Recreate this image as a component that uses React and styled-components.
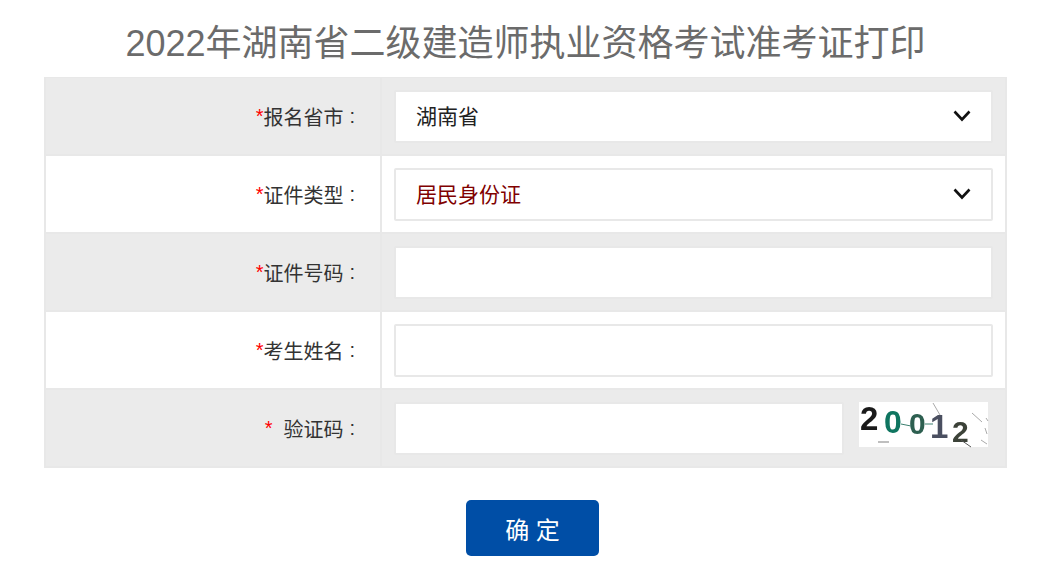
import styled, { createGlobalStyle } from 'styled-components';

const Global = createGlobalStyle`
  html, body {
    margin: 0;
    padding: 0;
    background: #fff;
    font-family: "Liberation Sans", "Noto Sans CJK SC", sans-serif;
  }
`;

const Page = styled.div`
  width: 963px;
  margin-left: 44px;
`;

const Titulo = styled.h1`
  margin: 0;
  height: 77px;
  padding-top: 21px;
  box-sizing: border-box;
  font-size: 36px;
  line-height: 46px;
  font-weight: normal;
  color: #6b6b6b;
  text-align: center;
  white-space: nowrap;
`;

const Tabla = styled.div`
  border: 1px solid #e8e8e8;
  border-bottom-width: 2px;
  border-left-width: 2px;
  border-right-width: 2px;
`;

const Fila = styled.div`
  display: grid;
  grid-template-columns: 336px 1fr;
  height: 76px;
  background: ${props => (props.$gris ? '#ebebeb' : '#fff')};
  border-bottom: 2px solid #e8e8e8;
  &:last-child {
    border-bottom: none;
  }
`;

const Etiqueta = styled.div`
  display: flex;
  align-items: center;
  justify-content: flex-end;
  padding-right: 25px;
  border-right: 2px solid #e8e8e8;
  font-size: 20px;
  color: #333;
  white-space: nowrap;
`;

const Asterisco = styled.span`
  color: #f00;
  margin-right: ${props => (props.$separado ? '11px' : '0')};
`;

const DosPuntos = styled.span`
  margin-left: 6px;
`;

const Campo = styled.div`
  display: flex;
  align-items: center;
  padding-left: 12px;
  gap: 15px;
`;

const SelectCaja = styled.div`
  position: relative;
  width: 599px;
  height: 53px;
`;

const Select = styled.select`
  width: 100%;
  height: 100%;
  box-sizing: border-box;
  appearance: none;
  background: #fff;
  border: 2px solid #e8e8e8;
  border-radius: 2px;
  padding: 0 0 0 20px;
  outline: none;
  font-family: inherit;
  font-size: 21px;
  color: ${props => props.$color};
`;

const Flecha = styled.svg`
  position: absolute;
  right: 22px;
  top: 19px;
  width: 18px;
  height: 14px;
  pointer-events: none;
`;

const Entrada = styled.input`
  width: ${props => props.$ancho};
  height: 53px;
  box-sizing: border-box;
  background: #fff;
  border: 2px solid #e8e8e8;
  border-radius: 2px;
  padding: 0 20px;
  outline: none;
  font-family: inherit;
  font-size: 21px;
`;

const Captcha = styled.svg`
  display: block;
  width: 129px;
  height: 45px;
  margin-bottom: 7px;
  background: #fff;
  overflow: visible;
`;

const Acciones = styled.div`
  display: flex;
  justify-content: center;
  padding-top: 32px;
  padding-left: 14px;
`;

const Boton = styled.button`
  width: 133px;
  height: 56px;
  background: #004ea6;
  color: #fff;
  border: none;
  border-radius: 5px;
  font-family: inherit;
  font-size: 24px;
  cursor: pointer;
`;

const filas = [
  { id: 'provincia', etiqueta: '报名省市', opciones: ['湖南省'], color: '#222' },
  { id: 'tipo', etiqueta: '证件类型', opciones: ['居民身份证'], color: '#800000' },
  { id: 'numero', etiqueta: '证件号码' },
  { id: 'nombre', etiqueta: '考生姓名' },
];

function Desplegable({ opciones, color }) {
  return (
    <SelectCaja>
      <Select $color={color}>
        {opciones.map(o => <option key={o}>{o}</option>)}
      </Select>
      <Flecha viewBox="0 0 18 14">
        <path d="M1.5 2.5 L9 10.5 L16.5 2.5" fill="none" stroke="#111" strokeWidth="2.6" />
      </Flecha>
    </SelectCaja>
  );
}

function ImagenCaptcha() {
  return (
    <Captcha viewBox="0 0 129 45">
      <g fontFamily="Liberation Sans, sans-serif" fontWeight="bold" style={{ filter: 'blur(0.5px)' }}>
        <text x="1" y="28" fontSize="33" fill="#1a1a1a">2</text>
        <text x="25" y="31" fontSize="32" fill="#0f7560">0</text>
        <text x="50" y="32" fontSize="30" fill="#2d5f50">0</text>
        <text x="71" y="36" fontSize="33" fill="#4a4f60">1</text>
        <text x="93" y="40" fontSize="30" fill="#3c4238">2</text>
      </g>
      <g fill="none" stroke="#aaa" strokeWidth="1">
        <path d="M19 40 H30" strokeWidth="1.5" />
        <path d="M42 22 L52 24 M66 22 L74 22" stroke="#3d8070" />
        <path d="M74 1 L81 13" />
        <path d="M113 11 L123 20 M127 16 L129 19 M122 38 L128 42 M126 26 L128 32" />
        <path d="M102 38 L112 45" stroke="#555" />
      </g>
    </Captcha>
  );
}

export default function App() {
  return (
    <>
      <Global />
      <Page>
        <Titulo>2022年湖南省二级建造师执业资格考试准考证打印</Titulo>
        <Tabla>
          {filas.map((fila, i) => (
            <Fila key={fila.id} $gris={i % 2 === 0}>
              <Etiqueta>
                <Asterisco>*</Asterisco>{fila.etiqueta}<DosPuntos>:</DosPuntos>
              </Etiqueta>
              <Campo>
                {fila.opciones
                  ? <Desplegable opciones={fila.opciones} color={fila.color} />
                  : <Entrada $ancho="599px" />}
              </Campo>
            </Fila>
          ))}
          <Fila $gris>
            <Etiqueta>
              <Asterisco $separado>*</Asterisco>验证码<DosPuntos>:</DosPuntos>
            </Etiqueta>
            <Campo>
              <Entrada $ancho="450px" />
              <ImagenCaptcha />
            </Campo>
          </Fila>
        </Tabla>
        <Acciones>
          <Boton type="button">确 定</Boton>
        </Acciones>
      </Page>
    </>
  );
}
